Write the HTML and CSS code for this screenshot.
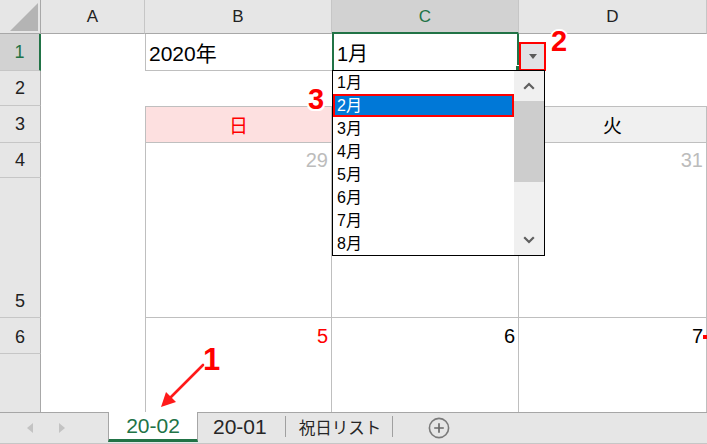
FILE: index.html
```html
<!DOCTYPE html>
<html lang="ja">
<head>
<meta charset="utf-8">
<title>Excel カレンダー</title>
<link rel="stylesheet" href="styles.css">
</head>
<body>
<div class="app">
  <div class="sheet">
    <div class="corner"><svg class="corner-tri" width="40" height="33" viewBox="0 0 40 33"><polygon points="10,31 38,31 38,3" fill="#b4b4b4"/></svg></div>
    <div class="ch">A</div>
    <div class="ch">B</div>
    <div class="ch ch-sel">C</div>
    <div class="ch">D</div>

    <div class="rh rh-sel row1">1</div>
    <div class="rh row2">2</div>
    <div class="rh row3">3</div>
    <div class="rh row4">4</div>
    <div class="rh row5 rh-bottom">5</div>
    <div class="rh row6 rh-top">6</div>
    <div class="rh row7 rh-open"></div>

    <div class="cell b1">2020年</div>
    <div class="cell c1">1月</div>

    <div class="cell wd sun">日</div>
    <div class="cell wd mon">月</div>
    <div class="cell wd tue">火</div>

    <div class="cell day w1 colB muted">29</div>
    <div class="cell day w1 colC muted">30</div>
    <div class="cell day w1 colD muted">31</div>

    <div class="cell day w2 colB red">5</div>
    <div class="cell day w2 colC">6</div>
    <div class="cell day w2 colD">7</div>
  </div>

  <div class="tabs">
    <div class="tab-nav">
      <span class="nav-left"></span>
      <span class="nav-right"></span>
    </div>
    <div class="tab tab-active">20-02</div>
    <div class="tab tab-2">20-01</div>
    <div class="tab-sep"></div>
    <div class="tab tab-3">祝日リスト</div>
    <div class="tab-sep"></div>
    <div class="tab-add">
      <svg width="22" height="22" viewBox="0 0 22 22"><circle cx="11" cy="11" r="9.6" fill="none" stroke="#7a7a7a" stroke-width="1.6"/><path d="M11 6.2v9.6M6.2 11h9.6" stroke="#6a6a6a" stroke-width="1.7"/></svg>
    </div>
  </div>

  <div class="fill-handle"></div>
  <div class="comment-mark"></div>

  <div class="dd-btn"><span class="dd-tri"></span></div>

  <div class="dd-list">
    <div class="dd-items">
      <div class="dd-item">1月</div>
      <div class="dd-item dd-sel">2月</div>
      <div class="dd-item">3月</div>
      <div class="dd-item">4月</div>
      <div class="dd-item">5月</div>
      <div class="dd-item">6月</div>
      <div class="dd-item">7月</div>
      <div class="dd-item">8月</div>
    </div>
    <div class="dd-scroll">
      <div class="sb-btn"><svg width="12" height="8" viewBox="0 0 12 8"><polyline points="1.2,6.8 6,2 10.8,6.8" fill="none" stroke="#5f5f5f" stroke-width="2.2"/></svg></div>
      <div class="sb-thumb"></div>
      <div class="sb-track"></div>
      <div class="sb-btn"><svg width="12" height="8" viewBox="0 0 12 8"><polyline points="1.2,1.2 6,6 10.8,1.2" fill="none" stroke="#5f5f5f" stroke-width="2.2"/></svg></div>
    </div>
  </div>

  <span class="callout callout-1">1</span>
  <span class="callout callout-2">2</span>
  <span class="callout callout-3">3</span>

  <svg class="arrow" width="707" height="444" viewBox="0 0 707 444">
    <line x1="203" y1="365" x2="170" y2="398" stroke="#ff1a1a" stroke-width="2.6" stroke-linecap="round"/>
    <polygon points="161,407 166,392 176,402" fill="#ff1a1a"/>
  </svg>
</div>
</body>
</html>
```

FILE: styles.css
```css
* {
  box-sizing: border-box;
}

body {
  margin: 0;
  font-family: "Liberation Sans", "Noto Sans CJK JP", sans-serif;
  color: #000;
}

.app {
  position: relative;
  width: 707px;
  height: 444px;
  overflow: hidden;
  background: #fff;
}

/* ---------- grid ---------- */
.sheet {
  display: grid;
  grid-template-columns: 41px 104px 187px 187px 188px;
  grid-template-rows: 34px 37px 35px 37px 35px 140px 36px 58px;
  height: 412px;
}

.corner {
  background: #e6e6e6;
  border-right: 1px solid #a8a8a8;
  border-bottom: 1px solid #a8a8a8;
}

.corner-tri {
  display: block;
}

.ch {
  background: #e6e6e6;
  border-right: 1px solid #c6c6c6;
  border-bottom: 1px solid #a8a8a8;
  display: flex;
  align-items: center;
  justify-content: center;
  font-size: 17px;
  color: #222;
  padding-top: 1px;
}

.ch-sel {
  background: #d2d2d2;
  color: #217346;
  border-bottom: 2px solid #217346;
  padding-top: 2px;
}

.rh {
  grid-column: 1;
  background: #e6e6e6;
  border-right: 1px solid #a8a8a8;
  border-bottom: 1px solid #c6c6c6;
  display: flex;
  align-items: center;
  justify-content: center;
  font-size: 18px;
  line-height: 22px;
  color: #222;
}

.rh-sel {
  background: #d2d2d2;
  color: #217346;
  border-right: 2px solid #217346;
}

.rh-bottom {
  align-items: flex-end;
  padding-bottom: 5px;
}

.rh-top {
  align-items: flex-start;
  padding-top: 8px;
}

.rh-open {
  border-bottom: none;
}

.row1 { grid-row: 2; }
.row2 { grid-row: 3; }
.row3 { grid-row: 4; }
.row4 { grid-row: 5; }
.row5 { grid-row: 6; }
.row6 { grid-row: 7; }
.row7 { grid-row: 8; }

.cell {
  display: flex;
}

.b1 {
  grid-row: 2;
  grid-column: 3;
  border-left: 1px solid #bfbfbf;
  border-bottom: 1px solid #bfbfbf;
  align-items: center;
  padding-left: 3px;
  font-size: 21px;
}

.c1 {
  grid-row: 2;
  grid-column: 4;
  border-left: 2px solid #217346;
  border-right: 2px solid #217346;
  align-items: center;
  padding-left: 3px;
  font-size: 20px;
}

.wd {
  grid-row: 4;
  border-top: 1px solid #bfbfbf;
  border-right: 1px solid #bfbfbf;
  border-bottom: 1px solid #bfbfbf;
  align-items: center;
  justify-content: center;
  font-size: 19px;
}

.sun {
  grid-column: 3;
  background: #fde0e0;
  color: #ff0000;
  border-left: 1px solid #bfbfbf;
}

.mon {
  grid-column: 4;
  background: #f0f0f0;
}

.tue {
  grid-column: 5;
  background: #f0f0f0;
}

.day {
  border-right: 1px solid #bfbfbf;
  justify-content: flex-end;
  align-items: flex-start;
  padding: 5px 3px 0 0;
  font-size: 20px;
  line-height: 24px;
}

.w1 {
  grid-row: 5 / span 2;
  border-bottom: 1px solid #bfbfbf;
}

.w2 {
  grid-row: 7 / span 2;
  padding-top: 6px;
}

.colB {
  grid-column: 3;
  border-left: 1px solid #bfbfbf;
}

.colC { grid-column: 4; }
.colD { grid-column: 5; }

.muted { color: #bcbcbc; }
.red { color: #ff0000; }

/* ---------- sheet tabs ---------- */
.tabs {
  display: flex;
  align-items: flex-start;
  height: 32px;
  background: #e6e6e6;
  border-top: 1px solid #a6a6a6;
  border-bottom: 1px solid #c6c6c6;
}

.tab-nav {
  width: 108px;
  height: 30px;
  display: flex;
  align-items: center;
  padding-left: 27px;
  gap: 26px;
}

.nav-left,
.nav-right {
  width: 0;
  height: 0;
  border-top: 5.5px solid transparent;
  border-bottom: 5.5px solid transparent;
}

.nav-left {
  border-right: 6px solid #c3c3c3;
}

.nav-right {
  border-left: 6px solid #c3c3c3;
}

.tab {
  height: 28px;
  display: flex;
  align-items: center;
  font-size: 21px;
  color: #262626;
}

.tab-active {
  width: 90px;
  height: 30px;
  margin-top: -1px;
  justify-content: center;
  background: #fff;
  border-left: 1px solid #a6a6a6;
  border-right: 1px solid #a6a6a6;
  border-bottom: 3px solid #217346;
  color: #217346;
  padding-top: 1px;
}

.tab-2 {
  padding: 0 18px 0 15px;
}

.tab-3 {
  padding: 0 11px 0 13px;
  font-size: 16.5px;
}

.tab-sep {
  width: 1px;
  height: 21px;
  margin-top: 3px;
  background: #a0a0a0;
}

.tab-add {
  margin-left: 35px;
  margin-top: 4px;
  height: 22px;
}

.tab-add svg {
  display: block;
}

/* ---------- overlays ---------- */
.fill-handle {
  position: absolute;
  left: 515px;
  top: 65px;
  width: 6px;
  height: 6px;
  background: #217346;
  border: 1px solid #fff;
}

.comment-mark {
  position: absolute;
  left: 703px;
  top: 335px;
  width: 4px;
  height: 4px;
  background: #ff0000;
}

.dd-btn {
  position: absolute;
  left: 519px;
  top: 42px;
  width: 27px;
  height: 29px;
  border: 2px solid #ff0000;
  background: #e1e2e5;
  display: flex;
  align-items: center;
  justify-content: center;
}

.dd-tri {
  width: 0;
  height: 0;
  border-left: 4.5px solid transparent;
  border-right: 4.5px solid transparent;
  border-top: 5px solid #5a5a5a;
}

.dd-list {
  position: absolute;
  left: 332px;
  top: 70px;
  width: 213px;
  border: 1px solid #000;
  background: #fff;
  display: flex;
}

.dd-items {
  flex: 1;
  display: flex;
  flex-direction: column;
}

.dd-item {
  height: 23px;
  line-height: 23px;
  padding-left: 4px;
  font-size: 16px;
  color: #000;
  white-space: nowrap;
}

.dd-sel {
  background: #0078d7;
  color: #fff;
  border: 2px solid #ff0000;
  padding-left: 2px;
  line-height: 19px;
}

.dd-scroll {
  width: 30px;
  background: #f0f0f0;
  display: flex;
  flex-direction: column;
}

.sb-btn {
  height: 30px;
  display: flex;
  align-items: center;
  justify-content: center;
}

.sb-btn svg {
  display: block;
}

.sb-thumb {
  height: 81px;
  background: #cdcdcd;
}

.sb-track {
  flex: 1;
}

.callout {
  position: absolute;
  font-family: "Liberation Sans", sans-serif;
  font-weight: bold;
  font-size: 29px;
  line-height: 1;
  color: #ff0000;
  text-shadow: 2px 0 0 #fff, -2px 0 0 #fff, 0 2px 0 #fff, 0 -2px 0 #fff,
    1.5px 1.5px 0 #fff, -1.5px -1.5px 0 #fff, 1.5px -1.5px 0 #fff, -1.5px 1.5px 0 #fff;
}

.callout-1 {
  left: 203px;
  top: 344px;
  font-size: 31px;
}

.callout-2 {
  left: 551px;
  top: 27px;
}

.callout-3 {
  left: 308px;
  top: 85px;
}

.arrow {
  position: absolute;
  left: 0;
  top: 0;
  pointer-events: none;
}
```
